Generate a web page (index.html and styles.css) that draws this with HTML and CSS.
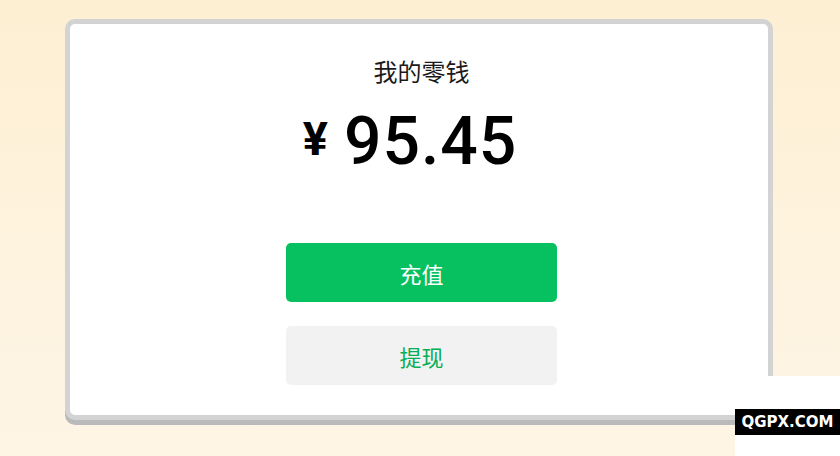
FILE: index.html
```html
<!DOCTYPE html>
<html lang="zh-CN">
<head>
    <meta charset="UTF-8">
    <meta name="viewport" content="width=device-width, initial-scale=1.0">
    <title>我的零钱</title>
    <link rel="stylesheet" href="styles.css">
</head>
<body>
    <div class="carteira">
        <h1 class="titulo">我的零钱</h1>
        <div class="saldo">
            <span class="moeda">¥</span><span class="valor">95.45</span>
        </div>
        <div class="acoes">
            <button class="btn btn-recarga">充值</button>
            <button class="btn btn-saque">提现</button>
        </div>
    </div>

    <div class="marca">
        <span>QGPX.COM</span>
    </div>
</body>
</html>
```

FILE: styles.css
```css
* {
    box-sizing: border-box;
}

body {
    margin: 0;
    width: 840px;
    height: 456px;
    overflow: hidden;
    font-family: 'Noto Sans CJK SC', 'Noto Sans', sans-serif;
    background: linear-gradient(180deg, #fdefd2 0%, #fef3df 60%, #fef5e6 100%);
    padding: 19px 0 0 65px;
    position: relative;
}

.carteira {
    width: 708px;
    height: 401px;
    background-color: #fff;
    border: 5px solid #d3d3d3;
    border-radius: 10px;
    box-shadow: 0 5px 0 #bababa;
    padding: 28px 0 0 5px;
    text-align: center;
}

.titulo {
    margin: 0;
    font-size: 24px;
    font-weight: normal;
    line-height: 38px;
    color: #1a1a1a;
}

.saldo {
    margin-top: 16px;
    height: 72px;
    display: flex;
    align-items: baseline;
    justify-content: center;
    padding-right: 23px;
    color: #000;
    font-family: 'Roboto', 'Liberation Sans', sans-serif;
}

.moeda {
    font-size: 47px;
    font-weight: 700;
    margin-right: 16px;
    position: relative;
    top: -9px;
}

.valor {
    font-size: 66px;
    font-weight: 500;
    line-height: 72px;
    letter-spacing: 1px;
}

.acoes {
    margin-top: 65px;
    display: flex;
    flex-direction: column;
    align-items: center;
    gap: 24px;
}

.btn {
    width: 271px;
    height: 59px;
    border: none;
    border-radius: 5px;
    font-family: 'Noto Sans CJK SC', 'Noto Sans', sans-serif;
    font-size: 22px;
    cursor: pointer;
}

.btn-recarga {
    background-color: #07c160;
    color: #fff;
}

.btn-saque {
    background-color: #f2f2f2;
    color: #06ae56;
}

.marca {
    position: absolute;
    left: 735px;
    top: 376px;
    width: 105px;
    height: 80px;
    background-color: #fff;
    padding-top: 33px;
}

.marca span {
    display: block;
    height: 26px;
    background-color: #000;
    color: #fff;
    font-family: 'DejaVu Sans', sans-serif;
    font-size: 15px;
    font-weight: bold;
    line-height: 26px;
    text-align: center;
}
```
